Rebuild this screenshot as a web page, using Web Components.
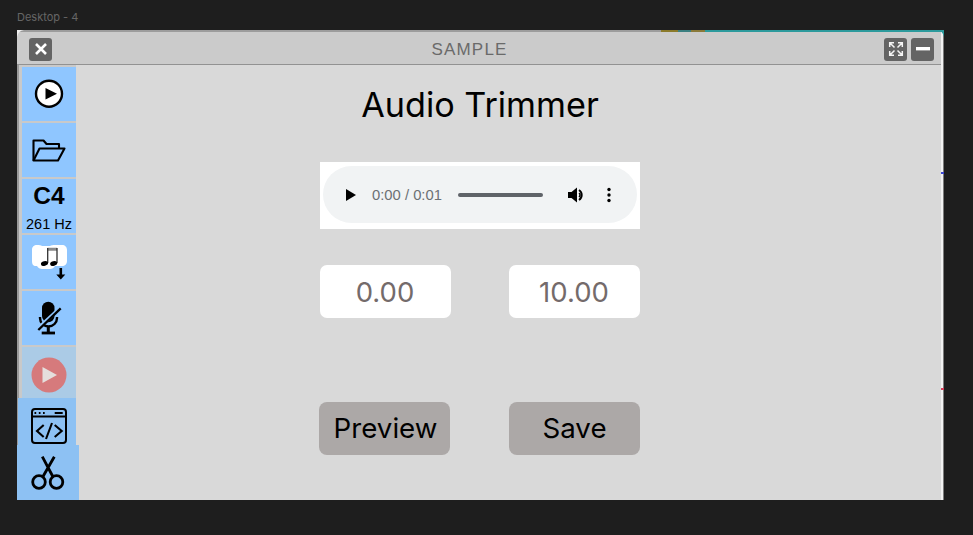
<!DOCTYPE html>
<html><head><meta charset="utf-8">
<style>
html,body{margin:0;height:100%;background:#1e1e1e;overflow:hidden}
body{width:973px;height:535px;font-family:Inter,"Liberation Sans",sans-serif}
</style></head><body>
<desk-frame label="Desktop - 4">
  <app-window>
    <title-bar slot="title" text="SAMPLE">
      <win-btn slot="left"><svg width="16" height="16" viewBox="0 0 16 16"><path d="M3 3l10 10M13 3L3 13" stroke="#fff" stroke-width="2.6"/></svg></win-btn>
      <win-btn slot="right"><svg width="16" height="16" viewBox="0 0 16 16" fill="none" stroke="#f4f4f4" stroke-width="1.5"><path d="M1.700 6V1.700H6M1.700 1.700l4.800 4.800M14.300 6V1.700H10M14.300 1.700L9.500 6.500M1.700 10v4.300H6M1.700 14.300l4.800-4.800M14.300 10v4.300H10M14.300 14.300L9.500 9.500"/></svg></win-btn>
      <win-btn slot="right"><svg width="14" height="4" viewBox="0 0 14 4"><rect width="14" height="3.4" fill="#fff"/></svg></win-btn>
    </title-bar>
    <side-bar slot="side">
      <side-item><svg width="32" height="32" viewBox="0 0 32 32"><circle cx="16" cy="15.700" r="13" fill="#fff" stroke="#000" stroke-width="2.400"/><path d="M12.500 10L24 15.700 12.500 21.400z"/></svg></side-item>
      <side-item><svg width="36" height="28" viewBox="0 0 36 28" fill="none" stroke="#000" stroke-width="2.100" stroke-linejoin="round"><path d="M2.500 24.500V4.500h10l3 3.500H28v4.500"/><path d="M2.500 24.500l6-12h25l-6.500 12z"/></svg></side-item>
      <side-item tight><span class="note">C4</span><span class="hz">261 Hz</span></side-item>
      <side-item><svg width="54" height="54" viewBox="0 0 54 54"><path d="M10 15c0-3.500 2-5 5-5 2.500 0 4 0 5 1h8c1-1 3-1 5-1h7c3 0 5 2 5 5v11c0 3-2 5-5 5h-7c-1 2-3 3-5 3h-8c-2 0-4-1-5-3h-1c-3 0-4-2-4-5z" fill="#fff"/><path d="M25.500 13.500h9.500M25.500 15h9.500" stroke="#8a8a8a" stroke-width="1.500"/><path d="M25.700 13v15M35 13v15" stroke="#333" stroke-width="1.300"/><ellipse cx="22.500" cy="28.500" rx="3.600" ry="2.300" transform="rotate(-15 22.500 28.500)"/><ellipse cx="31.700" cy="28.500" rx="3.600" ry="2.300" transform="rotate(-15 31.700 28.500)"/><path d="M37.500 33h2.600v6.500h3.200l-4.500 5-4.500-5h3.200z"/></svg></side-item>
      <side-item><svg width="54" height="54" viewBox="0 0 54 54"><path d="M20 17a6.200 6.200 0 0 1 12.500 0v8a6.200 6.200 0 0 1-12.500 0z"/><path d="M18 26v1a8.500 8.500 0 0 0 17 0v-1" fill="none" stroke="#000" stroke-width="2.400"/><path d="M26.300 35v6" stroke="#000" stroke-width="3"/><path d="M19.700 42h13.300" stroke="#000" stroke-width="2.800"/><path d="M18 35.500L38 17" stroke="#8fc6ff" stroke-width="3.500"/><path d="M16.300 39L38.700 17.300" stroke="#000" stroke-width="2.300"/></svg></side-item>
      <side-item dim><svg width="36" height="36" viewBox="0 0 36 36"><circle cx="18" cy="18" r="17.500" fill="#d67a7c"/><path d="M11.500 10L26 18 11.500 26z" fill="#e5dfdd"/></svg></side-item>
      <side-item wide><svg width="36" height="36" viewBox="0 0 36 36" fill="none" stroke="#000" stroke-width="2"><rect x="1" y="1" width="34" height="34" rx="3"/><path d="M1 8.500h34"/><path d="M23.700 5h8"/><path d="M3.500 5h1.700M7.800 5h1.700M12 5h1.700"/><path d="M12.700 17L6 23l6.700 6M23.700 17l7 6-7 6M21 15l-6 16" stroke-width="2.100"/></svg></side-item>
      <side-item widest><svg width="40" height="38" viewBox="0 0 40 38" fill="none" stroke="#000" stroke-width="2.800"><circle cx="11" cy="27" r="6.300"/><circle cx="28.500" cy="27" r="6.300"/><path d="M14.300 1.700L24.800 21.500M26.300 1.700L15 21.500"/></svg></side-item>
    </side-bar>
    <trim-panel heading="Audio Trimmer">
      <audio-player slot="player" time="0:00 / 0:01"></audio-player>
      <trim-field slot="fields" value="0.00"></trim-field>
      <trim-field slot="fields" value="10.00"></trim-field>
      <trim-button slot="actions" shift>Preview</trim-button>
      <trim-button slot="actions">Save</trim-button>
    </trim-panel>
  </app-window>
</desk-frame>
<script>
function def(name, css, html, init){
  customElements.define(name, class extends HTMLElement{
    constructor(){super();const r=this.attachShadow({mode:'open'});
      r.innerHTML='<style>'+css+'</style>'+html;}
    connectedCallback(){if(init)init(this,this.shadowRoot);}
  });
}
const attrText=(el,r,sel,attr)=>{r.querySelector(sel).textContent=el.getAttribute(attr)||''};

def('desk-frame',`:host{display:block;width:973px;height:535px;box-sizing:border-box;padding:10px 0 0 17px}
.l{height:14px;font:11px/14px Inter,"Liberation Sans",sans-serif;color:#666;margin-bottom:6px}`,
`<div class="l"></div><slot></slot>`,(e,r)=>attrText(e,r,'.l','label'));

def('app-window',`:host{display:flex;flex-direction:column;width:927px;height:470px;position:relative;background:#d9d9d9;overflow:hidden}
.edge{display:flex;height:2px;flex:none;background:#9c9c9c}
.edge i{display:block;height:2px}
.body{flex:1;display:flex;min-height:0}
.rail{position:absolute;right:0;top:2px;bottom:0;width:3px;background:linear-gradient(90deg,#f2f2f2 0 2px,#7d7d7d 2px)}
.m{position:absolute;right:0;width:3px;height:2px}
.c{position:absolute;top:0;width:8px;height:8px}
`,
`<div class="edge"><i style="flex:0 0 644px"></i><i style="flex:0 0 17px;background:#8a7a2a"></i><i style="flex:0 0 13px;background:#3b7f80"></i><i style="flex:0 0 14px;background:#8a7a3a"></i><i style="flex:1;background:#2c9a9c"></i></div>
<slot name="title"></slot>
<div class="body"><slot name="side"></slot><slot></slot></div>
<div class="rail"></div>
<div class="m" style="top:142px;background:#3d48d0"></div>
<div class="m" style="top:358px;background:#d8405c"></div>
<svg class="c" style="left:0" viewBox="0 0 8 8"><path d="M0 0h7Q1 1 0 7z" fill="#eee"/></svg>
<svg class="c" style="right:0" viewBox="0 0 8 8"><path d="M8 0H1Q7 1 8 7z" fill="#2c9a9c"/></svg>`);

def('title-bar',`:host{display:flex;align-items:center;height:33px;flex:none;box-sizing:border-box;padding:2px 10px 0 12px;background:#cbcbcb;border-bottom:1px solid #929292;position:relative}
.t{position:absolute;left:0;width:905px;margin-top:1px;text-align:center;font:17px "Liberation Sans",sans-serif;letter-spacing:1.200px;color:#6a6a6a;pointer-events:none}
.s{flex:1}
.r{display:flex;gap:4px}`,
`<slot name="left"></slot><span class="t"></span><span class="s"></span><div class="r"><slot name="right"></slot></div>`,
(e,r)=>attrText(e,r,'.t','text'));

def('win-btn',`:host{display:flex;align-items:center;justify-content:center;width:23px;height:23px;background:#646464;border-radius:3px}::slotted(svg){display:block}`,`<slot></slot>`);

def('side-bar',`:host{display:flex;flex-direction:column;width:59px;flex:none;box-sizing:border-box;padding-top:2px;background:linear-gradient(90deg,#9a9a9a 0 2px,#c9c9c9 2px)}`,`<slot></slot>`);

def('side-item',`:host{display:flex;flex-direction:column;align-items:center;justify-content:center;box-sizing:border-box;height:54px;margin:0 0 2px 5px;width:54px;background:#8fc6ff;flex:none;color:#000;font-family:"Liberation Sans",sans-serif}
:host([tight]){justify-content:flex-start;padding-top:4px}
:host([dim]){background:#abcbe6;height:51px;margin-bottom:0;padding-top:4px}
:host([wide]){margin:0 0 0 1px;width:58px;height:47px;background:#8dc1f3;padding:10px 0 0 3px;justify-content:flex-start}
:host([widest]){margin:0;width:62px;height:55px;background:#8dc1f3;justify-content:flex-start;padding-top:10px;z-index:1}
::slotted(.note){font:bold 24.500px/26px "Liberation Sans",sans-serif}
::slotted(.hz){font:14.500px/18px "Liberation Sans",sans-serif;margin-top:6px}
::slotted(svg){display:block;flex:none}`,
`<slot></slot>`);

def('trim-panel',`:host{display:flex;flex-direction:column;flex:1;box-sizing:border-box;padding:0 0 0 244px;min-width:0;font-family:Inter,sans-serif}
h1{margin:0;width:320px;height:97px;box-sizing:border-box;padding-top:18px;text-align:center;font:400 34.200px/44px Inter,sans-serif;color:#000;white-space:nowrap}
.f,.a{display:flex;justify-content:space-between;width:320px}
.f{margin-top:36px}.a{margin-top:84px}`,
`<h1></h1><slot name="player"></slot><div class="f"><slot name="fields"></slot></div><div class="a"><slot name="actions"></slot></div>`,
(e,r)=>attrText(e,r,'h1','heading'));

def('audio-player',`:host{display:block;width:320px;height:67px;box-sizing:border-box;background:#fff;padding:4px 3px 6px 3px}
.p{display:flex;align-items:center;height:57px;border-radius:29px;background:#f1f3f4;box-sizing:border-box;padding:0 0 0 23px;color:#6c7074;width:314px}
.t{font:14.800px "Liberation Sans",Roboto,sans-serif;margin:0 16px 0 16px;white-space:nowrap;width:70px;flex:none}
.b{width:85px;height:4px;border-radius:2px;background:#5f6368;flex:none}
svg{display:block;flex:none}`,
`<div class="p"><svg width="10" height="12" viewBox="0 0 10 12"><path d="M0 0l10 6-10 6z" fill="#000"/></svg><span class="t"></span><div class="b"></div>
<svg style="margin-left:25px" width="17" height="16" viewBox="0 0 17 16"><path d="M0 5h3.500L9 .5v15L3.500 11H0z"/><path d="M11 3a6 6 0 0 1 0 10" fill="none" stroke="#000" stroke-width="2"/><path d="M11 6a2.500 2.500 0 0 1 0 4" fill="none" stroke="#000" stroke-width="1.500"/></svg>
<svg style="margin-left:22px" width="4" height="16" viewBox="0 0 4 16"><circle cx="2" cy="2.500" r="1.700"/><circle cx="2" cy="8" r="1.700"/><circle cx="2" cy="13.500" r="1.700"/></svg></div>`,
(e,r)=>attrText(e,r,'.t','time'));

def('trim-field',`:host{display:flex;align-items:center;justify-content:center;width:131px;height:53px;background:#fff;border-radius:7px;font:27.500px Inter,sans-serif;color:#746b6b}
span{margin-left:-1px}`,
`<span></span>`,(e,r)=>attrText(e,r,'span','value'));

def('trim-button',`:host{display:flex;align-items:center;justify-content:center;width:131px;height:53px;box-sizing:border-box;padding-bottom:2px;background:#aca8a7;border-radius:8px;font:27.700px Inter,sans-serif;color:#000}
:host([shift]){margin-left:-1px;padding-left:2px}`,`<slot></slot>`);
</script>
</body></html>
